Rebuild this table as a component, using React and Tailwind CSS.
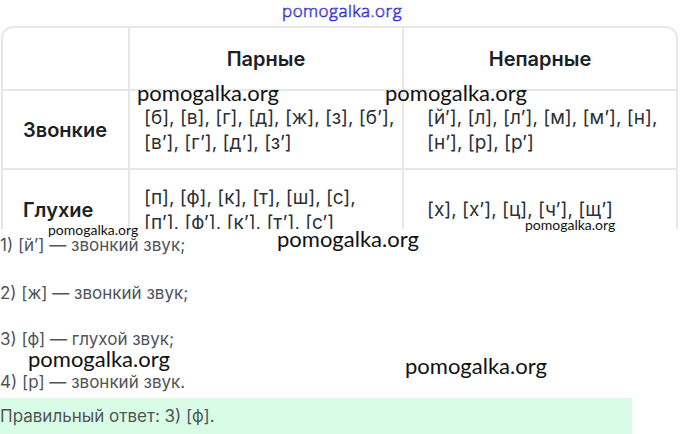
import React from "react";

const wm = "absolute leading-none text-[#111] font-['Lato',sans-serif] whitespace-nowrap";

function Mark({ className }) {
  return <span className={`${wm} ${className}`}>pomogalka.org</span>;
}

export default function App() {
  return (
    <div className="relative w-[680px] h-[434px] overflow-hidden bg-white font-['Inter',sans-serif]">
      {/* верхний водяной знак */}
      <div className="h-[26px] flex justify-center pt-[2px] pl-[4px]">
        <span className="text-[17px] leading-none tracking-[0.5px] font-light font-['Open_Sans',sans-serif] text-white [-webkit-text-stroke:0.7px_#3434cc]">
          pomogalka.org
        </span>
      </div>

      {/* таблица */}
      <div className="ml-[1px] w-[677px] h-[203px] overflow-hidden">
        <div className="border-2 border-[#e6e7e9] rounded-t-[12px] grid grid-cols-[127px_274px_1fr] text-[#1b1f26]">
          <div className="h-[63px] border-r-2 border-b-2 border-[#e6e7e9]" />
          <div className="h-[63px] border-r-2 border-b-2 border-[#e6e7e9] flex items-center justify-center text-[20px] font-semibold">
            Парные
          </div>
          <div className="h-[63px] border-b-2 border-[#e6e7e9] flex items-center justify-center text-[20px] font-semibold">
            Непарные
          </div>

          <div className="h-[79px] border-r-2 border-b-2 border-[#e6e7e9] flex items-center pl-[20px] text-[20px] font-semibold">
            Звонкие
          </div>
          <div className="h-[79px] border-r-2 border-b-2 border-[#e6e7e9] flex items-center pl-[14px] text-[19px] leading-[25px] text-[#2b2f36]">
            <p>
              [б], [в], [г], [д], [ж], [з], [б’],
              <br />
              [в’], [г’], [д’], [з’]
            </p>
          </div>
          <div className="h-[79px] border-b-2 border-[#e6e7e9] flex items-center pl-[23px] text-[19px] leading-[25px] text-[#2b2f36]">
            <p>
              [й’], [л], [л’], [м], [м’], [н],
              <br />
              [н’], [р], [р’]
            </p>
          </div>

          <div className="h-[79px] border-r-2 border-[#e6e7e9] flex items-center pl-[20px] text-[20px] font-semibold">
            Глухие
          </div>
          <div className="h-[79px] border-r-2 border-[#e6e7e9] flex items-center pl-[14px] text-[19px] leading-[25px] text-[#2b2f36]">
            <p>
              [п], [ф], [к], [т], [ш], [с],
              <br />
              [п’], [ф’], [к’], [т’], [с’]
            </p>
          </div>
          <div className="h-[79px] flex items-center pl-[23px] text-[19px] leading-[25px] text-[#2b2f36]">
            <p>[х], [х’], [ц], [ч’], [щ’]</p>
          </div>
        </div>
      </div>

      {/* разбор */}
      <div className="text-[17px] leading-[20px] text-[#505358]">
        <p className="mt-[6px]">1) [й’] — звонкий звук;</p>
        <p className="mt-[28px]">2) [ж] — звонкий звук;</p>
        <p className="mt-[26px]">3) [ф] — глухой звук;</p>
        <p className="mt-[23px]">4) [р] — звонкий звук.</p>
        <div className="mt-[6px] w-[632px] h-[40px] bg-[#d9fce6] flex items-center">
          <p className="-mt-[4px]">Правильный ответ: 3) [ф].</p>
        </div>
      </div>

      {/* водяные знаки */}
      <Mark className="left-[137px] top-[82px] text-[22px]" />
      <Mark className="left-[385px] top-[82px] text-[22px]" />
      <Mark className="left-[48px] top-[223px] text-[14px]" />
      <Mark className="left-[277px] top-[228px] text-[22px]" />
      <Mark className="left-[525px] top-[218px] text-[14px]" />
      <Mark className="left-[28px] top-[348px] text-[22px]" />
      <Mark className="left-[405px] top-[355px] text-[22px]" />
    </div>
  );
}
